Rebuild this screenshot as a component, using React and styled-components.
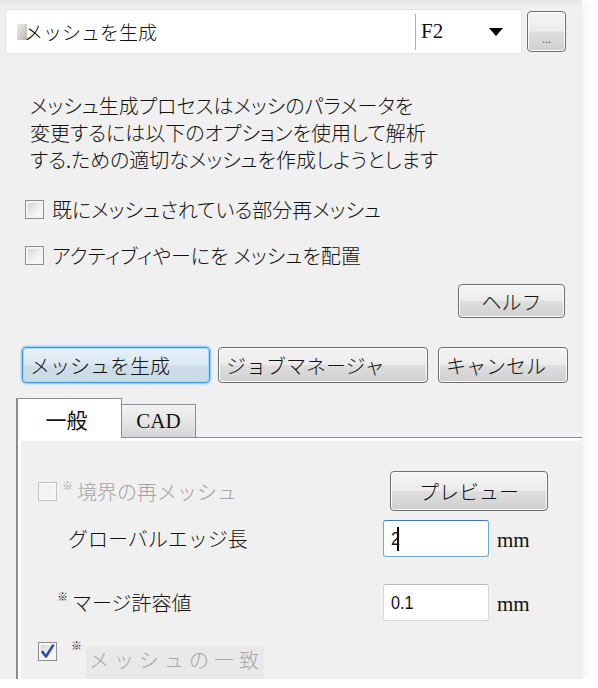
import React from 'react';
import styled, { createGlobalStyle, css } from 'styled-components';

const GlobalStyle = createGlobalStyle`
  body {
    margin: 0;
    background: #ffffff;
    font-family: "Liberation Serif", "Noto Sans CJK JP", serif;
    font-weight: 300;
    color: #111;
  }
`;

const Dialog = styled.div`
  width: 582px;
  height: 679px;
  box-sizing: border-box;
  padding-top: 9px;
  background: #f0f0f0;
  overflow: hidden;
  display: flex;
  flex-direction: column;
  box-shadow: 3px 3px 10px rgba(0, 0, 0, 0.07), inset 0 8px 6px -6px #e2e2e2;
`;

const TopBar = styled.div`
  display: flex;
  align-items: center;
  gap: 5px;
  padding-left: 5px;
`;

const ComboBox = styled.div`
  width: 517px;
  height: 45px;
  box-sizing: border-box;
  background: #fff;
  border: 1px solid #e1e4e9;
  border-radius: 3px;
  display: flex;
  align-items: center;
`;

const ComboLabel = styled.div`
  flex: 1;
  display: flex;
  align-items: center;
  padding-left: 11px;
  font-size: 19px;
  .icon {
    width: 10px;
    height: 18px;
    margin-right: -3px;
  }
`;

const ComboSep = styled.div`
  width: 1px;
  height: 36px;
  background: #b0b0b0;
`;

const ComboValue = styled.div`
  width: 68px;
  padding-left: 5px;
  font-size: 21px;
  font-weight: 400;
`;

const ComboArrow = styled.div`
  width: 0;
  height: 0;
  border-left: 7px solid transparent;
  border-right: 7px solid transparent;
  border-top: 8px solid #000;
  margin-right: 18px;
`;

const buttonFace = css`
  box-sizing: border-box;
  border: 1px solid #707070;
  border-radius: 4px;
  background: linear-gradient(#f4f4f4 0%, #ececec 48%, #dedede 52%, #d0d0d0 100%);
  box-shadow: inset 0 0 0 1px #fbfbfb;
  font-family: "Liberation Serif", "Noto Sans CJK JP", serif;
  font-weight: 300;
  font-size: 20px;
  color: #111;
  padding: 0;
`;

const BrowseButton = styled.button`
  ${buttonFace}
  width: 39px;
  height: 41px;
  font-size: 12px;
  line-height: 1;
  padding-top: 14px;
  color: #555;
`;

const Description = styled.div`
  margin: 40px 0 0 30px;
  font-size: 20px;
  line-height: 27px;
  font-feature-settings: "palt";
`;

const CheckRow = styled.label`
  display: flex;
  align-items: center;
  height: 30px;
  margin: ${(p) => p.$top}px 0 0 25px;
  font-size: 20px;
  font-feature-settings: "palt";
  gap: 8px;
`;

const Box = styled.span`
  width: 19px;
  height: 19px;
  box-sizing: border-box;
  flex-shrink: 0;
  border: 1px solid ${(p) => (p.$disabled ? '#c4c4c4' : '#8e8f8f')};
  background: ${(p) =>
    p.$disabled ? '#f4f4f4' : 'linear-gradient(135deg, #cfcfcf 0%, #f2f2f2 60%, #fdfdfd 100%)'};
  box-shadow: inset 0 0 0 2px ${(p) => (p.$disabled ? '#f7f7f7' : '#f4f4f4')};
  display: flex;
  align-items: center;
  justify-content: center;
`;

const HelpRow = styled.div`
  display: flex;
  justify-content: flex-end;
  padding-right: 17px;
  margin-top: 14px;
`;

const DialogButton = styled.button`
  ${buttonFace}
  width: ${(p) => p.$w}px;
  height: ${(p) => p.$h}px;
  margin-left: ${(p) => p.$ml || 0}px;
  text-align: ${(p) => (p.$left ? 'left' : 'center')};
  padding-left: ${(p) => (p.$left ? '7px' : '0')};
  ${(p) =>
    p.$focused &&
    css`
      border: 1px solid #3c93d6;
      background: linear-gradient(#e6f1f8 0%, #dbe8f1 48%, #cfdfea 52%, #c6d9e6 100%);
      box-shadow: 0 0 2px 1px #7cc6f3, inset 0 0 0 1px #a9dcf8;
    `}
`;

const ActionRow = styled.div`
  display: flex;
  padding-left: 22px;
  margin-top: 29px;
  gap: 8px;
`;

const TabStrip = styled.div`
  display: flex;
  align-items: flex-end;
  padding-left: 16px;
  margin-top: 15px;
  position: relative;
  z-index: 1;
  margin-bottom: -1px;
`;

const Tab = styled.div`
  box-sizing: border-box;
  width: ${(p) => p.$w}px;
  height: ${(p) => (p.$active ? 40 : 34)}px;
  border: 1px solid #898c95;
  border-bottom: ${(p) => (p.$active ? 'none' : '1px solid #898c95')};
  border-left: ${(p) => (p.$active ? '2px solid #898c95' : 'none')};
  background: ${(p) => (p.$active ? '#fff' : 'linear-gradient(#f3f3f3, #e6e6e6 50%, #d6d6d6)')};
  display: flex;
  align-items: center;
  justify-content: center;
  font-size: 21px;
  font-weight: 400;
  padding-right: ${(p) => (p.$active ? 6 : 0)}px;
`;

const TabPanel = styled.div`
  flex: 1;
  margin-left: 16px;
  box-sizing: border-box;
  border: 1px solid #898c95;
  border-left: 2px solid #898c95;
  border-right: none;
  border-bottom: none;
  background: #f0f0f0;
  box-shadow: inset 3px 3px 0 #ffffff;
  padding: 33px 0 0 20px;
  display: flex;
  flex-direction: column;
`;

const PanelRow = styled.div`
  display: flex;
  align-items: center;
  height: ${(p) => p.$h}px;
  margin-top: ${(p) => p.$top || 0}px;
`;

const LabelCell = styled.div`
  width: ${(p) => p.$w}px;
  height: 100%;
  display: flex;
  align-items: center;
  padding-left: ${(p) => p.$indent || 0}px;
  box-sizing: border-box;
  font-size: 20px;
  color: ${(p) => (p.$disabled ? '#a3a3a3' : '#111')};
`;

const Mark = styled.span`
  font-size: 11px;
  line-height: 1;
  position: relative;
  top: -5px;
  margin: 0 ${(p) => p.$gap || 4}px 0 ${(p) => p.$left || 0}px;
  color: ${(p) => (p.$disabled ? '#a3a3a3' : '#222')};
`;

const TextInput = styled.div`
  width: 106px;
  height: 37px;
  box-sizing: border-box;
  background: #fff;
  border: 1px solid ${(p) => (p.$focused ? '#6fa7d6' : '#d4d6da')};
  border-top-color: ${(p) => (p.$focused ? '#3d7bad' : '#b5b8be')};
  border-radius: 3px;
  display: flex;
  align-items: center;
  padding-left: 7px;
  font-family: "Liberation Sans", "DejaVu Sans", sans-serif;
  font-size: 19px;
  font-weight: 400;
  .value {
    display: inline-block;
    transform: scaleX(0.85);
    transform-origin: left center;
  }
  .caret {
    width: 2px;
    height: 24px;
    background: #000;
    margin-left: -5px;
  }
`;

const Unit = styled.span`
  margin-left: 8px;
  font-size: 21px;
  font-weight: 400;
  padding-top: 4px;
`;

const FadedText = styled.span`
  align-self: flex-end;
  background: #e9e9e9;
  color: #a8a8a8;
  font-size: 20px;
  letter-spacing: 5px;
  line-height: 28px;
  padding: 0 0 4px 3px;
  margin-bottom: -8px;
`;

const Check = () => (
  <svg width="15" height="15" viewBox="0 0 15 15">
    <path d="M2.5 8 L6 12.5 L13 1.5" fill="none" stroke="#2d4fa8" strokeWidth="2.6" strokeLinecap="round" strokeLinejoin="round" />
  </svg>
);

const App = () => (
  <>
    <GlobalStyle />
    <Dialog>
      <TopBar>
        <ComboBox>
          <ComboLabel>
            <svg className="icon" viewBox="0 0 10 18">
              <defs>
                <linearGradient id="ic" x1="0" y1="0" x2="1" y2="1">
                  <stop offset="0" stopColor="#f0f0f0" />
                  <stop offset="1" stopColor="#b4b4b4" />
                </linearGradient>
              </defs>
              <rect x="0" y="1" width="10" height="16" fill="url(#ic)" />
            </svg>
            メッシュを生成
          </ComboLabel>
          <ComboSep />
          <ComboValue>F2</ComboValue>
          <ComboArrow />
        </ComboBox>
        <BrowseButton>...</BrowseButton>
      </TopBar>

      <Description>
        メッシュ生成プロセスはメッシのパラメータを
        <br />
        変更するには以下のオプションを使用して解析
        <br />
        する.ための適切なメッシュを作成しようとします
      </Description>

      <CheckRow $top={19}>
        <Box />
        既にメッシュされている部分再メッシュ
      </CheckRow>
      <CheckRow $top={16}>
        <Box />
        アクティブィやーにを メッシュを配置
      </CheckRow>

      <HelpRow>
        <DialogButton $w={107} $h={34}>ヘルフ</DialogButton>
      </HelpRow>

      <ActionRow>
        <DialogButton $w={188} $h={36} $left $focused>メッシュを生成</DialogButton>
        <DialogButton $w={210} $h={36} $left>ジョブマネージャ</DialogButton>
        <DialogButton $w={130} $h={36} $left $ml={2}>キャンセル</DialogButton>
      </ActionRow>

      <TabStrip>
        <Tab $w={106} $active>一般</Tab>
        <Tab $w={74}>CAD</Tab>
      </TabStrip>
      <TabPanel>
        <PanelRow $h={40}>
          <LabelCell $w={352} $disabled>
            <Box $disabled />
            <Mark $disabled $left={5}>※</Mark>
            境界の再メッシュ
          </LabelCell>
          <DialogButton $w={158} $h={40}>プレビュー</DialogButton>
        </PanelRow>
        <PanelRow $h={37} $top={9}>
          <LabelCell $w={345} $indent={30}>グローバルエッジ長</LabelCell>
          <TextInput $focused>
            <span className="value">2</span>
            <span className="caret" />
          </TextInput>
          <Unit>mm</Unit>
        </PanelRow>
        <PanelRow $h={37} $top={27}>
          <LabelCell $w={345} $indent={19}>
            <Mark>※</Mark>
            マージ許容値
          </LabelCell>
          <TextInput>
            <span className="value">0.1</span>
          </TextInput>
          <Unit>mm</Unit>
        </PanelRow>
        <PanelRow $h={40} $top={10}>
          <LabelCell $w={345}>
            <Box>
              <Check />
            </Box>
            <Mark $left={14} $gap={4}>※</Mark>
            <FadedText>メッシュの一致</FadedText>
          </LabelCell>
        </PanelRow>
      </TabPanel>
    </Dialog>
  </>
);

export default App;
